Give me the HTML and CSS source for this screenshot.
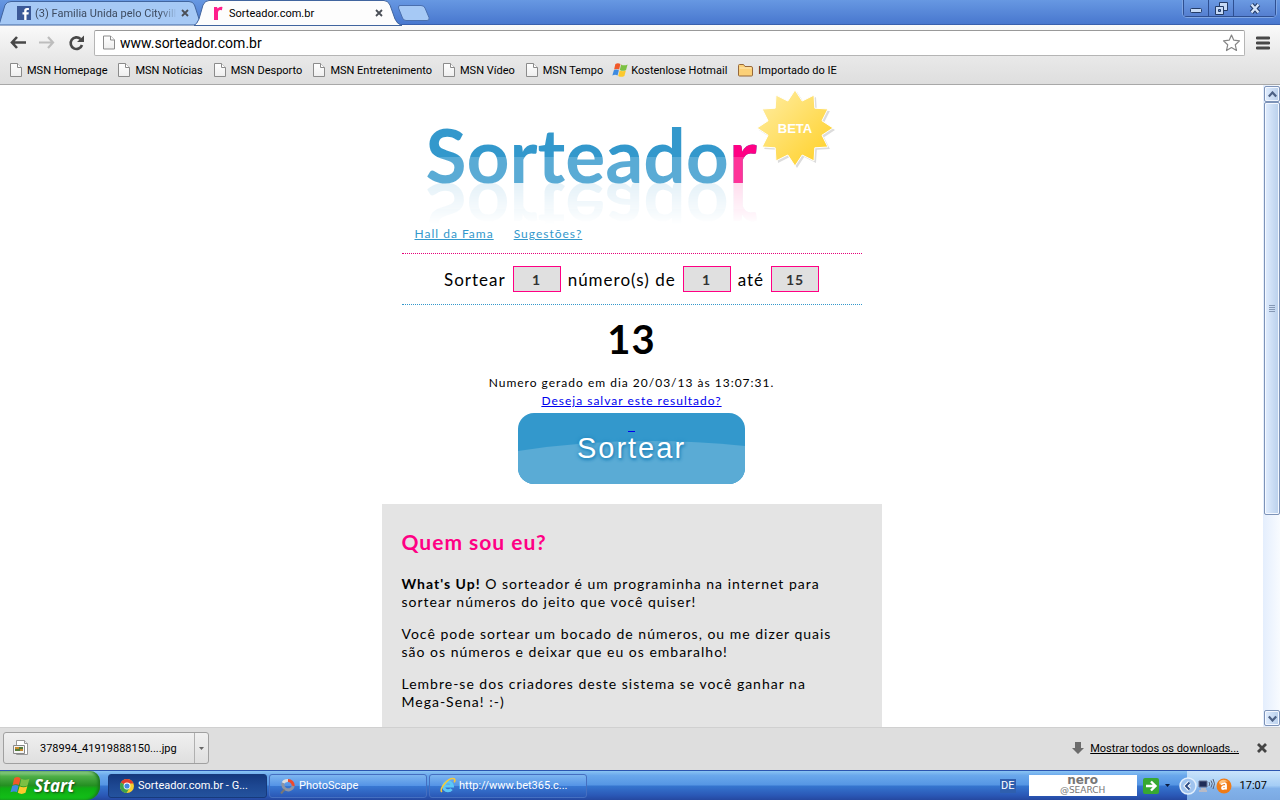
FILE: index.html
```html
<!DOCTYPE html>
<html lang="pt">
<head>
<meta charset="utf-8">
<title>Sorteador.com.br</title>
<link rel="stylesheet" href="styles.css">
</head>
<body>
<svg width="0" height="0" class="defs" aria-hidden="true">
  <defs>
    <linearGradient id="pageFill" x1="0" y1="0" x2="0" y2="1"><stop offset="0" stop-color="#fff"/><stop offset="1" stop-color="#eee"/></linearGradient>
    <symbol id="doc" viewBox="0 0 12 14"><path d="M.5.5h7l4 4v9H.5z" fill="url(#pageFill)" stroke="#8b8b8b"/><path d="M7.500.5v4h4" fill="#fff" stroke="#8b8b8b"/></symbol>
    <symbol id="flag" viewBox="0 1 19 18">
      <path d="M4 3Q7 1 10 3L8.500 9.500Q6 8 2.500 9.500z" fill="#f0592a"/>
      <path d="M10.800 3.500Q14 5.500 18.500 3.500L16.700 10Q13 12 9.300 10z" fill="#7cc043"/>
      <path d="M2.200 10.200Q5 8.700 8.200 10.200L6.600 16.500Q4 15 .4 16.500z" fill="#3f8be0"/>
      <path d="M9.100 10.700Q13 12.500 16.500 10.700L14.700 17Q11 19 7.400 17z" fill="#fcc92d"/>
    </symbol>
    <symbol id="close" viewBox="0 0 8 8"><path d="M1 1l6 6M7 1L1 7" stroke="#4a4f57" stroke-width="1.800"/></symbol>
  </defs>
</svg>

<header class="titlebar">
  <div class="tab">
    <svg class="tab-shape" viewBox="0 0 202 25" preserveAspectRatio="none"><path d="M-1 25L5 5Q7 1.500 11 1.500H189Q193 1.500 194.500 5L201 25z" fill="#a6c9f5" stroke="#41659f"/></svg>
    <svg width="14" height="14" viewBox="0 0 14 14"><path d="M0 0h14v14H0z" fill="#3b5998"/><path d="M9.500 14V8.500h2l.3-2.200H9.500V5q0-1 1.100-1h1.300V2H10Q7.200 2 7.200 4.700v1.600H5.500v2.200h1.700V14z" fill="#fff"/></svg>
    <span class="tab-title faded">(3) Familia Unida pelo Cityvill</span>
    <button class="bare" aria-label="Fechar guia"><svg width="8" height="8"><use href="#close"/></svg></button>
  </div>
  <div class="tab active">
    <svg class="tab-shape" viewBox="0 0 202 25" preserveAspectRatio="none"><path d="M-4 25.500Q-1 24 1 19L5 5Q7 .5 11 .5H186Q190 .5 192 5L197 19Q199 24 204 25.500z" fill="#fdfdfd" stroke="#41659f"/></svg>
    <svg width="14" height="15" viewBox="0 0 14 15"><path d="M3 14V1h3l.6 1.500Q8.500.4 11.500 1l-.6 3.300Q7 3.300 7 7v7z" fill="#ff1e8c"/></svg>
    <span class="tab-title">Sorteador.com.br</span>
    <button class="bare" aria-label="Fechar guia"><svg width="8" height="8"><use href="#close"/></svg></button>
  </div>
  <button class="bare newtab" aria-label="Nova guia"><svg width="34" height="18" viewBox="0 0 34 18"><path d="M2.500 1.500H24Q27 1.500 28 4l4 9.500q1 3-2 3H9Q6.500 16.500 5.500 14L1.500 4Q1 1.500 3 1.500z" fill="#a6c9f5" stroke="#4a6fae"/></svg></button>
  <div class="window-buttons">
    <button aria-label="Minimizar"><svg width="12" height="12" viewBox="0 0 12 12"><rect x=".5" y="6.500" width="11" height="4" rx="1" fill="#c6daf6" stroke="#243c67"/></svg></button>
    <button aria-label="Restaurar"><svg width="13" height="13" viewBox="0 0 13 13"><path d="M4.500.5h8v8h-8z" fill="#c6daf6" stroke="#243c67"/><path d="M.5 4.500h8v8h-8z" fill="#c6daf6" stroke="#243c67"/><path d="M3.500 7.500h2v2h-2z" fill="#5c88d4" stroke="#243c67"/></svg></button>
    <button class="wide" aria-label="Fechar"><svg width="12" height="11" viewBox="0 0 12 11"><path d="M2.500 1.500l7 8M9.500 1.500l-7 8" stroke="#243c67" stroke-width="4.500"/><path d="M2.500 1.500l7 8M9.500 1.500l-7 8" stroke="#d5e4fa" stroke-width="2.400"/></svg></button>
  </div>
</header>

<div class="toolbar">
  <button class="bare" aria-label="Voltar"><svg width="16" height="13" viewBox="0 0 16 13"><path d="M7 1L2 6.500 7 12M2 6.500h14" fill="none" stroke="#484848" stroke-width="2.600"/></svg></button>
  <button class="bare" aria-label="Avançar"><svg width="16" height="13" viewBox="0 0 16 13"><path d="M9 1l5 5.500L9 12M14 6.500H0" fill="none" stroke="#bdbdbd" stroke-width="2.200"/></svg></button>
  <button class="bare" aria-label="Recarregar"><svg width="17" height="16" viewBox="0 0 17 16"><path d="M12.500 4A5.800 5.800 0 1 0 14 10" fill="none" stroke="#484848" stroke-width="2.600"/><path d="M16 .5V7H9z" fill="#484848"/></svg></button>
  <label class="omnibox">
    <svg width="12" height="15"><use href="#doc"/></svg>
    <input type="text" value="www.sorteador.com.br" aria-label="Endereço">
    <svg width="19" height="18" viewBox="0 0 19 18"><path d="M9.500 1l2.300 5.200 5.700.7-4.200 3.900 1.200 5.700-5-2.900-5 2.900 1.200-5.700L1.500 6.900l5.700-.7z" fill="#fff" stroke="#858585" stroke-width="1.200" stroke-linejoin="round"/></svg>
  </label>
  <button class="bare" aria-label="Menu"><svg width="14" height="14" viewBox="0 0 14 14"><path d="M1 2h12M1 7h12M1 12h12" stroke="#484848" stroke-width="2.800" stroke-linecap="round"/></svg></button>
</div>

<nav class="bookmarks">
  <a href="#"><svg width="12" height="14"><use href="#doc"/></svg>MSN Homepage</a>
  <a href="#"><svg width="12" height="14"><use href="#doc"/></svg>MSN Notícias</a>
  <a href="#"><svg width="12" height="14"><use href="#doc"/></svg>MSN Desporto</a>
  <a href="#"><svg width="12" height="14"><use href="#doc"/></svg>MSN Entretenimento</a>
  <a href="#"><svg width="12" height="14"><use href="#doc"/></svg>MSN Vídeo</a>
  <a href="#"><svg width="12" height="14"><use href="#doc"/></svg>MSN Tempo</a>
  <a href="#" class="near"><svg width="16" height="16"><use href="#flag"/></svg>Kostenlose Hotmail</a>
  <a href="#"><svg width="15" height="14" viewBox="0 0 15 14"><path d="M.5 12V2.500q0-1 1-1h4l1.500 2h6q1.500 0 1.500 1.500v7q0 1-1 1h-12q-1 0-1-1z" fill="#fbd078" stroke="#96683a"/><path d="M1.500 5h12" stroke="#ffe9b5"/></svg>Importado do IE</a>
</nav>

<div class="viewport">
  <main class="page">
    <div class="column">
      <div class="brand">
        <h1 class="logo">Sorteado<span>r</span></h1>
        <svg class="beta" width="80" height="80" viewBox="0 0 80 80">
          <defs><linearGradient id="gold" x1="0" y1="0" x2="1" y2="1"><stop offset="0.100" stop-color="#ffeb9a"/><stop offset="0.900" stop-color="#ffd22e"/></linearGradient></defs>
          <path transform="translate(3 3)" fill="#dcdcdc" d="M76 38L65 45.200 70.900 57 57.800 57.800 57 70.900 45.200 65 38 76 30.800 65 19 70.900 18.200 57.800 5.100 57 11 45.200 0 38 11 30.800 5.100 19 18.200 18.200 19 5.100 30.800 11 38 0 45.200 11 57 5.100 57.800 18.200 70.900 19 65 30.800z"/>
          <path transform="translate(1 1)" fill="url(#gold)" stroke="#fff" d="M76 38L65 45.200 70.900 57 57.800 57.800 57 70.900 45.200 65 38 76 30.800 65 19 70.900 18.200 57.800 5.100 57 11 45.200 0 38 11 30.800 5.100 19 18.200 18.200 19 5.100 30.800 11 38 0 45.200 11 57 5.100 57.800 18.200 70.900 19 65 30.800z"/>
          <text x="39" y="44" text-anchor="middle" class="beta-text">BETA</text>
        </svg>
      </div>
      <nav class="links"><a href="#">Hall da Fama</a><a href="#">Sugestões?</a></nav>
      <form class="draw">
        <label for="qty">Sortear</label><input id="qty" type="text" value="1">
        <label for="from">número(s) de</label><input id="from" type="text" value="1">
        <label for="to">até</label><input id="to" type="text" value="15">
      </form>
      <section class="result">
        <strong>13</strong>
        <p>Numero gerado em dia 20/03/13 às 13:07:31.</p>
        <a href="#">Deseja salvar este resultado?</a>
      </section>
      <button class="sortear">
        <svg viewBox="0 0 227 71" preserveAspectRatio="none"><path d="M0 38Q110 21 227 33V71H0z" fill="#5aabd5"/></svg>
        <i></i>
        <span>Sortear</span>
      </button>
      <section class="about">
        <h2>Quem sou eu?</h2>
        <p><b>What's Up!</b> O sorteador é um programinha na internet para<br>sortear números do jeito que você quiser!</p>
        <p>Você pode sortear um bocado de números, ou me dizer quais<br>são os números e deixar que eu os embaralho!</p>
        <p>Lembre-se dos criadores deste sistema se você ganhar na<br>Mega-Sena! :-)</p>
      </section>
    </div>
  </main>
  <div class="scrollbar">
    <button aria-label="Rolar para cima"><svg width="9" height="7" viewBox="0 0 9 7"><path d="M.8 5.500l3.700-4 3.700 4" fill="none" stroke="#4d6185" stroke-width="2.200"/></svg></button>
    <div class="track"><div class="thumb"><svg width="6" height="8" viewBox="0 0 6 8"><path d="M0 .5h6M0 2.500h6M0 4.500h6M0 6.500h6" stroke="#8598b5"/></svg></div></div>
    <button aria-label="Rolar para baixo"><svg width="9" height="7" viewBox="0 0 9 7"><path d="M.8 1.500l3.700 4 3.700-4" fill="none" stroke="#4d6185" stroke-width="2.200"/></svg></button>
  </div>
</div>

<div class="downloads">
  <div class="download">
    <button class="file"><svg width="16" height="16" viewBox="0 0 16 16"><path d="M3.500.5h8l3 3v11h-11z" fill="#fff" stroke="#999"/><path d="M11.500.5v3h3" fill="#eee" stroke="#999"/><path d="M.5 5.500h11v8H.5z" fill="#f4f4f4" stroke="#888"/><path d="M2 7h8v4H2z" fill="#557b38"/><path d="M2 7h4v2H2zM7 9h3v2H7z" fill="#c98a2e"/></svg>378994_41919888150....jpg</button>
    <button class="more" aria-label="Opções"><svg width="5" height="3" viewBox="0 0 5 3"><path d="M0 0h5L2.500 3z" fill="#666"/></svg></button>
  </div>
  <a href="#" class="all"><svg width="12" height="12" viewBox="0 0 12 12"><path d="M3 0h6v6h3l-6 6-6-6h3z" fill="#6c6c6c"/></svg><span>Mostrar todos os downloads...</span></a>
  <button class="bare" aria-label="Fechar barra"><svg width="10" height="10" viewBox="0 0 10 10"><path d="M1 1l8 8M9 1L1 9" stroke="#444" stroke-width="2.800"/></svg></button>
</div>

<footer class="taskbar">
  <button class="start"><svg width="20" height="19"><use href="#flag"/></svg>Start</button>
  <div class="tasks">
    <button class="task current"><svg width="16" height="16" viewBox="0 0 16 16"><circle cx="8" cy="8" r="7" fill="#f7cf2f"/><path d="M8 8L1.900 4.500A7 7 0 0 1 14.500 5.500H8z" fill="#e13c2f"/><path d="M8 8L1.900 4.500A7 7 0 0 0 7.500 15L10.500 10z" fill="#3fa34a"/><circle cx="8" cy="8" r="3.400" fill="#fff"/><circle cx="8" cy="8" r="2.600" fill="#4286e0"/></svg><span>Sorteador.com.br - G...</span></button>
    <button class="task"><svg width="16" height="16" viewBox="0 0 16 16" fill="none" stroke-width="3"><path d="M3 5A5.200 5.200 0 0 1 8 2.500" stroke="#ddd"/><path d="M8 2.500A5.300 5.300 0 0 1 13.300 8" stroke="#ef4a2c"/><path d="M13.300 8A5.300 5.300 0 1 1 3 5" stroke="#8d95a4"/><path d="M4.500 11.500L1 15.500" stroke="#777" stroke-width="2"/></svg><span>PhotoScape</span></button>
    <button class="task"><svg width="16" height="17" viewBox="0 0 18 18" fill="none"><path d="M4.500 9.500H14A5 5 0 1 0 13 13" stroke="#5cc8f7" stroke-width="3.400"/><path d="M2 16.500C-1 12 10-1 16 1.500q1.500 1 0 4" stroke="#f5c93a" stroke-width="1.800"/></svg><span>http://www.bet365.c...</span></button>
  </div>
  <span class="lang">DE</span>
  <div class="nero"><b>nero</b><span>@SEARCH</span></div>
  <button class="bare go" aria-label="Pesquisar"><svg width="16" height="16" viewBox="0 0 16 16"><rect width="16" height="16" rx="2" fill="#37a832"/><path d="M3 8h9M8 3.500L12.500 8 8 12.500" fill="none" stroke="#fff" stroke-width="2.400"/></svg></button>
  <svg class="caret" width="5" height="3" viewBox="0 0 5 3"><path d="M0 0h5L2.500 3z" fill="#0a1c3f"/></svg>
  <div class="tray">
    <svg width="18" height="18" viewBox="0 0 18 18"><circle cx="9" cy="9" r="8" fill="#9fc3ee" stroke="#e2effc" stroke-width="1.500"/><path d="M10.500 5.500L7 9l3.500 3.500" fill="none" stroke="#fff" stroke-width="4"/><path d="M10.500 5.500L7 9l3.500 3.500" fill="none" stroke="#2c4c85" stroke-width="2"/></svg>
    <svg width="17" height="16" viewBox="0 0 17 16"><path d="M1 3h8v6H1z" fill="#1f2c58" stroke="#656f90"/><path d="M3 10h5v2H3zM1 12h8v2H1z" fill="#b8bac6"/><path d="M11 4q1.500 2 0 4M13 2.500q2.500 3 0 7M15 1q3 4.500 0 10" fill="none" stroke="#555f78"/></svg>
    <svg width="16" height="16" viewBox="0 0 16 16"><circle cx="8" cy="8" r="7.500" fill="#f07b16"/><path d="M3 4Q7 0 12 3.500 7 3 4 7z" fill="#ffc27c"/><path d="M5 6.500Q10 3.500 10 7v4.500M10 8q-4 0-4 2t4 0" fill="none" stroke="#fff" stroke-width="1.800"/></svg>
    <time>17:07</time>
  </div>
</footer>
</body>
</html>
```
FILE: styles.css
```css
* { box-sizing: border-box; }

body {
  margin: 0;
  height: 100vh;
  display: flex;
  flex-direction: column;
  overflow: hidden;
  background: #fff;
  color: #000;
  font-family: Roboto, "Noto Sans", sans-serif;
  font-size: 11px;
}

button, input { font: inherit; color: inherit; margin: 0; padding: 0; }
svg { flex: none; display: block; }
.defs { position: absolute; }
.bare { border: 0; background: none; display: flex; }

/* Window frame */
.titlebar {
  flex: none;
  height: 25px;
  display: flex;
  align-items: flex-start;
  background: linear-gradient(#6798e2, #4978cf 94%, #30539b);
}
.tab {
  position: relative;
  isolation: isolate;
  width: 198px;
  height: 25px;
  padding: 1px 9px 0 17px;
  display: flex;
  align-items: center;
  gap: 4px;
}
.tab.active { z-index: 1; padding: 1px 13px 0 13px; }
.tab-shape { position: absolute; inset: 0; width: 202px; height: 25px; z-index: -1; overflow: visible; }
.tab-title { flex: 1; overflow: hidden; white-space: nowrap; }
.faded { color: #3d4b60; mask-image: linear-gradient(90deg, #000 88%, transparent); }
.newtab { margin: 4px 0 0 1px; }
.window-buttons {
  margin-left: auto;
  margin-right: 4px;
  height: 17px;
  display: flex;
  border: 1px solid #2e4f91;
  border-top: 0;
  border-radius: 0 0 4px 4px;
  box-shadow: 0 0 0 1px #7fa6e4;
}
.window-buttons button {
  width: 25px;
  border: 0;
  border-right: 1px solid #2e4f91;
  background: linear-gradient(#6b9ae2, #557fd0);
  display: flex;
  align-items: center;
  justify-content: center;
}
.window-buttons .wide { width: 41px; border-right: 0; }

.toolbar {
  flex: none;
  height: 33px;
  padding: 2px 10px 0;
  display: flex;
  align-items: center;
  gap: 13px;
  background: linear-gradient(#fafafa, #e8e8e8);
}
.omnibox {
  flex: 1;
  height: 26px;
  margin: 0 -2px 0 -4px;
  padding: 0 3px 0 8px;
  display: flex;
  align-items: center;
  gap: 5px;
  border: 1px solid #b5b5b5;
  border-top-color: #999;
  border-radius: 2px;
  background: #fff;
}
.omnibox input { flex: 1; border: 0; background: none; outline: 0; font-size: 14px; }

.bookmarks {
  flex: none;
  height: 27px;
  padding: 0 10px 2px;
  display: flex;
  align-items: center;
  gap: 11px;
  background: linear-gradient(#e8e8e8, #dedede);
  border-bottom: 1px solid #a8a8a8;
}
.bookmarks a { display: flex; align-items: center; gap: 5px; color: #000; text-decoration: none; white-space: nowrap; }
.bookmarks .near { gap: 3px; margin-left: -2px; }

/* Web page */
.viewport { flex: 1; min-height: 0; display: flex; }
.page { flex: 1; overflow: hidden; font-family: Lato, "Open Sans", sans-serif; letter-spacing: 1px; }
.column { max-width: 500px; margin: 0 auto; display: flex; flex-direction: column; }
.brand { position: relative; height: 140px; padding: 19px 0 0 44px; }
.logo {
  display: inline-block;
  margin: 0;
  font: 700 75px/100px Lato, sans-serif;
  letter-spacing: normal;
  color: transparent;
  background: linear-gradient(#3398cc 53%, #5aabd5 53%);
  background-clip: text;
  -webkit-box-reflect: below -42px linear-gradient(transparent 38%, rgba(0, 0, 0, 0.160) 78%);
}
.logo span { background: linear-gradient(#ff0084 53%, #ff3399 53%); background-clip: text; }
.beta { position: absolute; top: 4px; left: 374px; }
.beta-text { font: 700 13px "Liberation Sans", sans-serif; letter-spacing: normal; fill: #fff; }

.links { display: flex; gap: 20px; padding: 0 33px; font-size: 12px; line-height: 18px; }
.links a { color: #3398cc; }
.draw {
  margin: 10px 20px 0;
  height: 52px;
  display: flex;
  align-items: center;
  justify-content: center;
  gap: 7px;
  border-top: 1px dotted #e6007a;
  border-bottom: 1px dotted #3398cc;
  font-size: 17px;
}
.draw input {
  width: 48px;
  height: 26px;
  border: 1px solid #ff0084;
  background: #e0e0e0;
  color: #333;
  font-size: 14px;
  font-weight: 700;
  letter-spacing: 1px;
  text-align: center;
}
.result { display: flex; flex-direction: column; align-items: center; font-size: 12px; line-height: 18px; }
.result strong { font-size: 40px; line-height: 69px; }
.result p { margin: 0; }
.result a { color: #0000ee; }
.sortear {
  position: relative;
  align-self: center;
  width: 227px;
  height: 71px;
  margin: 3px 0 20px;
  border: 0;
  border-radius: 16px;
  overflow: hidden;
  background: #3398cc;
  color: #fff;
  font: 29px "Liberation Sans", sans-serif;
  letter-spacing: 2px;
}
.sortear svg { position: absolute; inset: 0; width: 100%; height: 100%; }
.sortear i { position: absolute; top: 18px; left: 110px; width: 7px; height: 1px; background: #0000ee; }
.sortear span { position: relative; text-shadow: 0 0 4px #1d83ba, 1px 2px 3px #2789be; }

.about { padding: 20px 20px 40px; background: #e4e4e4; font-size: 14px; line-height: 18px; }
.about h2 { margin: 4px 0 19px; font-size: 21px; line-height: 28px; color: #ff0084; }
.about p { margin: 0 0 14px; white-space: nowrap; }

.scrollbar { width: 17px; padding: 1px 0; display: flex; flex-direction: column; background: linear-gradient(90deg, #e4eefd, #f8fbff); }
.scrollbar button, .thumb {
  display: flex;
  align-items: center;
  justify-content: center;
  margin: 0 0 0 1px;
  border: 1px solid #7d93b8;
  border-radius: 2px;
  background: linear-gradient(90deg, #e0edff, #b9cfeb);
  box-shadow: inset 0 0 0 1px #f4f8ff;
}
.scrollbar button { height: 16px; }
.track { flex: 1; }
.thumb { height: 68%; }

/* Download shelf */
.downloads {
  flex: none;
  height: 43px;
  padding: 0 13px 2px 3px;
  display: flex;
  align-items: center;
  border-top: 1px solid #d0d0d0;
  background: #dedede;
}
.download { display: flex; height: 32px; border: 1px solid #a0a0a0; border-radius: 3px; background: linear-gradient(#f0f0f0, #dfdfdf); }
.file { width: 190px; padding-left: 9px; display: flex; align-items: center; gap: 11px; border: 0; background: none; white-space: nowrap; }
.more { width: 14px; display: flex; align-items: center; justify-content: center; border: 0; border-left: 1px solid #b0b0b0; background: none; }
.all { margin-left: auto; margin-right: 18px; display: flex; align-items: center; gap: 6px; color: #000; }

/* Taskbar */
.taskbar {
  flex: none;
  height: 30px;
  display: flex;
  align-items: center;
  border-top: 1px solid #2b55b0;
  background: linear-gradient(#8ac4f3, #6aa8ec 15%, #5596e4 48%, #3575cf 52%, #2a57b5 85%, #2548a0);
  color: #fff;
}
.start {
  width: 100px;
  height: 29px;
  padding-left: 10px;
  display: flex;
  align-items: center;
  gap: 4px;
  border: 0;
  border-radius: 0 10px 14px 0;
  background: linear-gradient(#a3d89a, #4fae48 18%, #258f22 50%, #0fae13 60%, #13c219);
  box-shadow: inset -2px 0 3px #1b7420;
  font: italic 700 17px "Open Sans", sans-serif;
  text-shadow: 1px 1px 2px #174f16;
}
.tasks { flex: 1; display: flex; gap: 2px; padding-left: 8px; }
.task {
  width: 158px;
  height: 24px;
  padding: 0 10px;
  display: flex;
  align-items: center;
  gap: 3px;
  border: 1px solid #456fc0;
  border-radius: 3px;
  background: linear-gradient(#7db6f0, #5594e6 48%, #3877d2 52%, #2a58b6);
  white-space: nowrap;
}
.task.current { width: 159px; border-color: #173a7c; background: linear-gradient(#14397f, #1d4791 48%, #24539e); }
.lang { padding: 0 1px; background: #2f5fae; line-height: 14px; }
.nero {
  width: 108px;
  height: 21px;
  margin: 0 6px 0 13px;
  display: flex;
  flex-direction: column;
  align-items: center;
  background: #fff;
  color: #777;
  font-family: "DejaVu Sans", sans-serif;
  font-size: 9px;
  line-height: 8px;
}
.nero b { font-size: 12px; line-height: 11px; }
.caret { margin: 0 9px 0 6px; }
.tray {
  height: 29px;
  padding-right: 13px;
  display: flex;
  align-items: center;
  gap: 1px;
  background: linear-gradient(#c9e4fb, #a5cdf5 50%, #82b2ea 60%, #7ba9e2) 8px 0 no-repeat;
  color: #000;
}
.tray time { margin-left: 7px; }
```
